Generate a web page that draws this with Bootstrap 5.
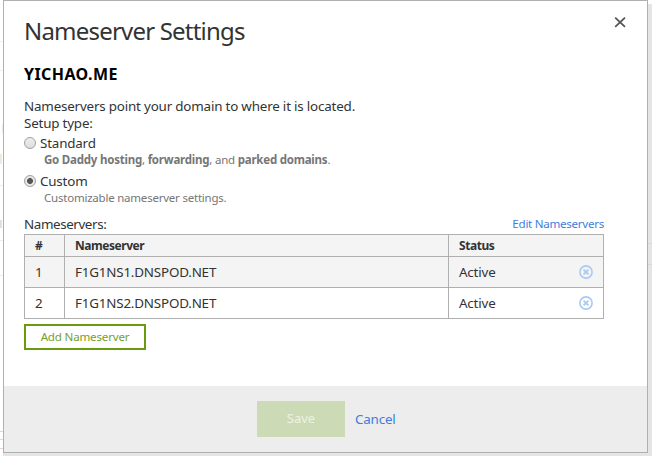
<!DOCTYPE html>
<html lang="en">
<head>
<meta charset="utf-8">
<title>Nameserver Settings</title>
<link href="https://cdn.jsdelivr.net/npm/bootstrap@5.3.0/dist/css/bootstrap.min.css" rel="stylesheet">
<style>
body{width:652px;height:456px;overflow:hidden;font-family:"Noto Sans","Open Sans",sans-serif;font-size:13.4px;line-height:17px;letter-spacing:-.19px;color:#333;background:linear-gradient(#fff 4px,#e5e5e5 4px);padding:0 4px 3px 3px}
.page-edge{left:0;top:0;width:3px;height:456px;background:linear-gradient(#f0f0f0,#f0f0f0) 0 41px/3px 1px no-repeat,linear-gradient(#f0f0f0,#f0f0f0) 0 70px/3px 1px no-repeat,linear-gradient(#f3e9ec,#f3e9ec) 2px 124px/1px 9px no-repeat,linear-gradient(#e8eedb,#e8eedb) 0 154px/2px 10px no-repeat,linear-gradient(#eee,#eee) 0 185px/3px 1px no-repeat,linear-gradient(#e6dde4,#e6dde4) 0 220px/2px 8px no-repeat,linear-gradient(#eee,#eee) 0 240px/3px 1px no-repeat,linear-gradient(#eee,#eee) 0 275px/3px 1px no-repeat,linear-gradient(#e4d0d8,#e4d0d8) 0 431px/3px 1px no-repeat,linear-gradient(#ddd,#ddd) 0 439px/3px 1px no-repeat,linear-gradient(#e4d0d8,#e4d0d8) 0 448px/3px 1px no-repeat,#fff}
.right-edge{right:0;top:243px;width:4px;height:22px;border:solid #d9d9d9;border-width:1px 0}
.dialog{width:645px;height:453px;border:1px solid #b0b0b0}
.dialog-main{height:385px;padding:13px 20px 0}
h1{font-size:24px;line-height:34px;margin:0;letter-spacing:-.8px}
h2{font-size:16px;line-height:24px;margin:14px 0 12px;color:#000;letter-spacing:.42px}
.x-btn{width:14px;height:14px;margin:1px 0 0 0}
.options{margin-top:2px}
.option{height:38px}
.option-row{height:18px;gap:4px}
.dial{width:12px;height:12px;border:1px solid #a0a0a0;border-radius:50%;background:linear-gradient(#eee,#ddd)}
.dial.on{background:radial-gradient(circle,#555 0 2.6px,#e8e8e8 3.3px)}
.hint{font-size:11.5px;line-height:15px;letter-spacing:-.22px;color:#767676;padding-left:20px}
.blue{color:#3f7de0;text-decoration:none}
.ns-head{width:580px;height:18px;margin-top:6px}
.ns-label{letter-spacing:-.4px}
.ns-head .blue{font-size:11.6px;line-height:15px;letter-spacing:-.28px}
.ns-table{width:580px;margin:0;table-layout:fixed;border-collapse:collapse;color:#333}
.ns-table th,.ns-table td{border:1px solid #b0b0b0;padding:0 10px;vertical-align:middle}
.ns-table th{height:22px;font-size:12px;background:#f4f4f4;line-height:20px;padding-top:1px;letter-spacing:-.46px}
.ns-table td{height:31px;background:#fff}
.ns-table .shade td{background:#f4f4f4}
.add-btn{width:122px;height:26px;margin-top:5px;border:2px solid #6a9a0d;border-radius:0;font-size:11.6px;line-height:20px;letter-spacing:-.2px;padding:0;color:#76a02a;background:#fff}
.dialog-foot{height:66px;background:#ededed;padding:0 0 0 253px;gap:10px}
.save-btn{width:88px;height:36px;background:#ccdab5;color:#edf2e4;border:0;border-radius:0;font-size:13px;letter-spacing:0}
</style>
<script src="https://cdn.jsdelivr.net/npm/bootstrap@5.3.0/dist/js/bootstrap.bundle.min.js"></script>
</head>
<body>
<div class="page-edge position-absolute"></div>
<div class="right-edge position-absolute"></div>
<main class="dialog bg-white d-flex flex-column">
<section class="dialog-main">
<div class="d-flex justify-content-between align-items-start">
<h1 class="fw-normal">Nameserver Settings</h1>
<svg class="x-btn" viewBox="0 0 14 14" role="img" aria-label="Close"><path d="M2.2 2.7 12 11.8M12 2.7 2.2 11.8" stroke="#555" stroke-width="1.8"/></svg>
</div>
<h2 class="fw-bold">YICHAO.ME</h2>
<div>Nameservers point your domain to where it is located.</div>
<div>Setup type:</div>
<div class="options">
<div class="option">
<div class="option-row d-flex align-items-center"><span class="dial"></span><span>Standard</span></div>
<div class="hint"><b>Go Daddy hosting</b>, <b>forwarding</b>, and <b>parked domains</b>.</div>
</div>
<div class="option">
<div class="option-row d-flex align-items-center"><span class="dial on"></span><span>Custom</span></div>
<div class="hint">Customizable nameserver settings.</div>
</div>
</div>
<div class="ns-head d-flex justify-content-between"><span class="ns-label">Nameservers:</span><a class="blue" href="#">Edit Nameservers</a></div>
<table class="ns-table">
<colgroup><col style="width:40px"><col style="width:384px"><col></colgroup>
<thead><tr><th>#</th><th>Nameserver</th><th>Status</th></tr></thead>
<tbody>
<tr class="shade"><td>1</td><td>F1G1NS1.DNSPOD.NET</td><td><div class="d-flex justify-content-between align-items-center"><span>Active</span><svg width="14" height="14" viewBox="0 0 14 14"><circle cx="7" cy="7" r="6.1" fill="none" stroke="#a9caf2" stroke-width="1.6"/><path d="m4.6 4.6 4.8 4.8m0-4.8-4.8 4.8" stroke="#a9caf2" stroke-width="1.8"/></svg></div></td></tr>
<tr><td>2</td><td>F1G1NS2.DNSPOD.NET</td><td><div class="d-flex justify-content-between align-items-center"><span>Active</span><svg width="14" height="14" viewBox="0 0 14 14"><circle cx="7" cy="7" r="6.1" fill="none" stroke="#a9caf2" stroke-width="1.6"/><path d="m4.6 4.6 4.8 4.8m0-4.8-4.8 4.8" stroke="#a9caf2" stroke-width="1.8"/></svg></div></td></tr>
</tbody>
</table>
<button class="add-btn btn d-block" type="button">Add Nameserver</button>
</section>
<footer class="dialog-foot d-flex align-items-center"><button class="save-btn btn" type="button">Save</button><a class="blue" href="#">Cancel</a></footer>
</main>
</body>
</html>
